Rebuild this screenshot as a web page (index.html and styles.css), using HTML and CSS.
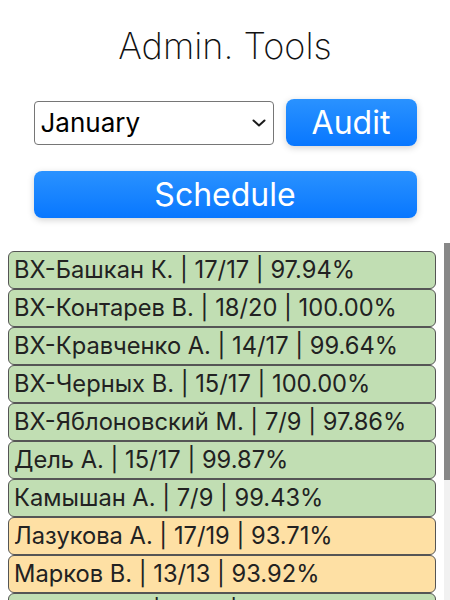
FILE: index.html
```html
<!DOCTYPE html>
<html lang="ru">
<head>
<meta charset="utf-8">
<title>Admin. Tools</title>
<link rel="stylesheet" href="styles.css">
</head>
<body>
<div class="page">
  <h1 class="title">Admin. Tools</h1>
  <div class="controls">
    <div class="controls-row">
      <div class="select-wrap">
        <select class="month">
          <option>January</option>
          <option>February</option>
          <option>March</option>
          <option>April</option>
          <option>May</option>
          <option>June</option>
          <option>July</option>
          <option>August</option>
          <option>September</option>
          <option>October</option>
          <option>November</option>
          <option>December</option>
        </select>
        <svg class="chevron" width="14" height="8" viewBox="0 0 14 8" aria-hidden="true">
          <path d="M1.5 1.5 L7 6.5 L12.5 1.5" fill="none" stroke="#1b1b1b" stroke-width="2" stroke-linecap="round" stroke-linejoin="round"/>
        </svg>
      </div>
      <button class="btn btn-audit">Audit</button>
    </div>
    <button class="btn btn-schedule">Schedule</button>
  </div>
  <div class="list-wrap">
    <div class="list">
      <div class="item ok">ВХ-Башкан К. | 17/17 | 97.94%</div>
      <div class="item ok">ВХ-Контарев В. | 18/20 | 100.00%</div>
      <div class="item ok">ВХ-Кравченко А. | 14/17 | 99.64%</div>
      <div class="item ok">ВХ-Черных В. | 15/17 | 100.00%</div>
      <div class="item ok">ВХ-Яблоновский М. | 7/9 | 97.86%</div>
      <div class="item ok">Дель А. | 15/17 | 99.87%</div>
      <div class="item ok">Камышан А. | 7/9 | 99.43%</div>
      <div class="item warn">Лазукова А. | 17/19 | 93.71%</div>
      <div class="item warn">Марков В. | 13/13 | 93.92%</div>
      <div class="item ok">Новиков Д. | 16/17 | 98.12%</div>
      <div class="item ok">Орлова Е. | 12/13 | 96.50%</div>
      <div class="item ok">Петров С. | 17/17 | 99.10%</div>
      <div class="item warn">Сидоренко И. | 9/11 | 92.40%</div>
      <div class="item ok">Федоров Н. | 14/15 | 98.75%</div>
    </div>
    <div class="scrollbar">
      <div class="scroll-thumb"></div>
    </div>
  </div>
</div>
</body>
</html>
```
FILE: styles.css
```css
html, body {
  margin: 0;
  padding: 0;
  background: #ffffff;
}

body {
  font-family: "Inter", "Noto Sans", sans-serif;
  color: #222222;
}

.page {
  display: flex;
  flex-direction: column;
  height: 100vh;
  overflow: hidden;
}

.title {
  margin: 0;
  padding-top: 23px;
  font-size: 36px;
  line-height: 46px;
  font-weight: 200;
  text-align: center;
  color: #111111;
}

.controls {
  margin-top: 30px;
  display: flex;
  flex-direction: column;
  align-items: center;
  gap: 25px;
}

.controls-row {
  width: 383px;
  display: flex;
  align-items: center;
  gap: 12px;
}

.select-wrap {
  position: relative;
  width: 240px;
  height: 44px;
}

.month {
  -webkit-appearance: none;
  appearance: none;
  width: 100%;
  height: 100%;
  box-sizing: border-box;
  font-family: "Inter", "Noto Sans", sans-serif;
  font-size: 26px;
  color: #000;
  background: #fff;
  border: 1px solid #767676;
  border-radius: 4px;
  padding: 0 30px 0 6px;
  outline: none;
}

.chevron {
  position: absolute;
  right: 8px;
  top: 18px;
  pointer-events: none;
}

.btn {
  height: 47px;
  box-sizing: border-box;
  border: none;
  border-radius: 8px;
  background: linear-gradient(to bottom, #2a92ff, #0877ff);
  color: #ffffff;
  font-family: "Inter", "Noto Sans", sans-serif;
  font-size: 32px;
  font-weight: 400;
  box-shadow: 0 2px 7px rgba(0, 0, 0, 0.18);
  padding: 0;
  cursor: pointer;
}

.btn-audit {
  flex: 1;
}

.btn-schedule {
  width: 383px;
}

.list-wrap {
  margin-top: 25px;
  flex: 1;
  min-height: 0;
  display: flex;
}

.list {
  flex: 1;
  min-width: 0;
  overflow: hidden;
  padding: 8px;
}

.scrollbar {
  width: 6px;
  background: #f1f1f1;
}

.scroll-thumb {
  height: 237px;
  background: #888888;
}

.item {
  border: 1px solid #555555;
  border-radius: 6px;
  padding: 3px 5px;
  font-size: 23.7px;
  line-height: 30px;
  color: #222222;
  white-space: nowrap;
}

.item.ok {
  background: #c1deb3;
}

.item.warn {
  background: #fee0a4;
}
```
